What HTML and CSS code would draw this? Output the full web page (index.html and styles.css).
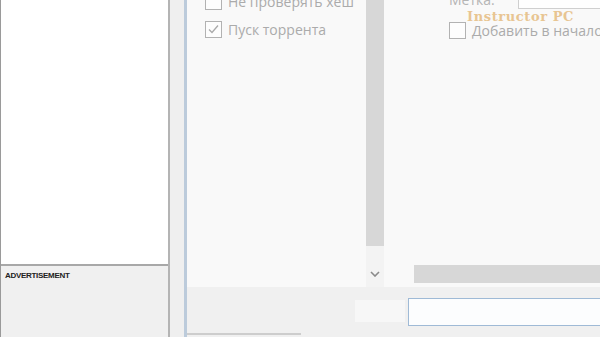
FILE: index.html
```html
<!DOCTYPE html>
<html lang="ru">
<head>
    <meta charset="UTF-8">
    <title>Добавление торрента</title>
    <link rel="stylesheet" href="styles.css">
</head>
<body>
    <div class="side">
        <div class="ad-box"></div>
        <div class="ad-label">ADVERTISEMENT</div>
    </div>
    <div class="gap"></div>
    <div class="window">
        <div class="content">
            <div class="left-pane">
                <label class="check"><span class="box"></span>Не проверять хеш</label>
                <label class="check"><span class="box checked">
                    <svg width="13" height="13" viewBox="0 0 13 13"><path d="M2 6.5 L5 9.5 L11 2.5" fill="none" stroke="#a9a9a9" stroke-width="1.3"/></svg>
                </span>Пуск торрента</label>
            </div>
            <div class="vscroll">
                <div class="vthumb"></div>
                <div class="arrow">
                    <svg width="10" height="6" viewBox="0 0 10 6"><path d="M1 1 L5 5 L9 1" fill="none" stroke="#8a8a8a" stroke-width="1.6"/></svg>
                </div>
            </div>
            <div class="right-pane">
                <div class="tag-row">
                    <span class="tag-label">Метка:</span>
                    <span class="tag-input"></span>
                </div>
                <label class="check"><span class="box"></span>Добавить в начало очереди</label>
                <div class="hscroll"><div class="hthumb"></div></div>
                <div class="watermark">Instructor PC</div>
            </div>
        </div>
        <div class="footer">
            <div class="small-box"></div>
            <div class="path-input"></div>
            <div class="footer-line"></div>
        </div>
    </div>
</body>
</html>
```

FILE: styles.css
```css
body {
    margin: 0;
    width: 600px;
    height: 337px;
    overflow: hidden;
    display: flex;
    background: #f1f1f1;
    font-family: "Open Sans", "Noto Sans", sans-serif;
}
.side {
    width: 170px;
    flex-shrink: 0;
    display: flex;
    flex-direction: column;
    background: #f0f0f0;
    border-left: 1px solid #9a9a9a;
    border-right: 2px solid #b4b4b4;
    box-sizing: border-box;
}
.ad-box {
    height: 266px;
    background: #ffffff;
    border-bottom: 2px solid #a8a8a8;
    box-sizing: border-box;
}
.ad-label {
    padding: 5px 0 0 4px;
    font-family: "Liberation Sans", Arial, sans-serif;
    font-size: 8px;
    font-weight: bold;
    letter-spacing: -0.3px;
    color: #222;
}
.gap {
    width: 14px;
    flex-shrink: 0;
    background: #efefef;
    border-right: 3px solid #bccbdb;
}
.window {
    flex: 1;
    min-width: 0;
    display: flex;
    flex-direction: column;
    background: #f9f9f9;
}
.content {
    height: 287px;
    display: flex;
}
.left-pane {
    width: 161px;
    flex-shrink: 0;
    padding-left: 18px;
    margin-top: -8px;
    display: flex;
    flex-direction: column;
    gap: 9px;
}
.check {
    display: flex;
    align-items: center;
    gap: 6px;
    font-size: 14px;
    color: #ababab;
    white-space: nowrap;
}
.box {
    width: 15px;
    height: 15px;
    border: 1px solid #b2b2b2;
    background: #fdfdfd;
    display: flex;
    align-items: center;
    justify-content: center;
    flex-shrink: 0;
}
.vscroll {
    width: 18px;
    flex-shrink: 0;
    display: flex;
    flex-direction: column;
    background: #f3f3f3;
}
.vthumb {
    height: 246px;
    background: #d7d7d7;
}
.arrow {
    margin-top: 25px;
    display: flex;
    justify-content: center;
}
.right-pane {
    flex: 1;
    min-width: 0;
    position: relative;
    display: flex;
    flex-direction: column;
    padding-left: 65px;
    overflow: hidden;
}
.tag-row {
    height: 9px;
    display: flex;
    align-items: flex-end;
    margin-bottom: 12px;
}
.tag-label {
    flex-shrink: 0;
    font-size: 14px;
    color: #b5b5b5;
    line-height: 14px;
    margin-bottom: 2px;
    width: 69px;
}
.tag-input {
    flex-shrink: 0;
    width: 100px;
    height: 30px;
    border: 1px solid #cfcfcf;
    background: #fefefe;
}
.hscroll {
    margin-top: auto;
    margin-bottom: 4px;
    margin-left: -35px;
    height: 18px;
}
.hthumb {
    height: 100%;
    background: #d7d7d7;
}
.watermark {
    position: absolute;
    left: 83px;
    top: 9px;
    font-family: "DejaVu Serif", serif;
    font-weight: bold;
    font-size: 13px;
    letter-spacing: 0.6px;
    color: #e8c592;
}
.footer {
    flex: 1;
    position: relative;
    display: flex;
    align-items: flex-start;
    background: #f0f0f0;
    padding: 11px 0 0 168px;
    gap: 3px;
}
.small-box {
    margin-top: 2px;
    width: 50px;
    height: 22px;
    background: #f7f7f7;
}
.path-input {
    flex: 1;
    height: 26px;
    border: 1px solid #9fbad6;
    border-right: none;
    background: #fcfdfe;
}
.footer-line {
    position: absolute;
    left: 0;
    bottom: 2px;
    width: 114px;
    height: 2px;
    background: #cdcdcd;
}
```
